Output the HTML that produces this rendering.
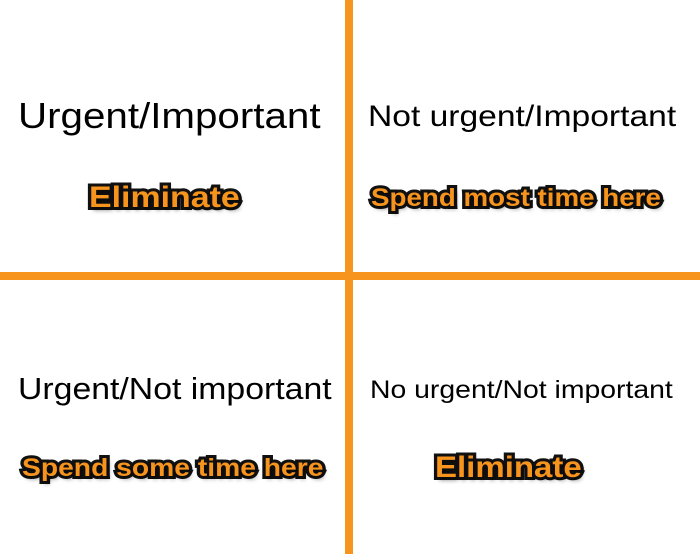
<!DOCTYPE html>
<html><head><style>
body{margin:0;width:700px;height:554px;background:#fff;position:relative;overflow:hidden;font-family:"Liberation Sans",sans-serif}
.v{position:absolute;left:345px;top:0;width:8px;height:554px;background:#f7941d}
.h{position:absolute;left:0;top:272px;width:700px;height:8px;background:#f7941d}
.t,.o{position:absolute;white-space:nowrap;transform-origin:0 0}
.t{color:#000}
.o{font-weight:bold;color:#f7941d;-webkit-text-stroke:6px #111;paint-order:stroke fill;text-shadow:2px 3px 4px rgba(0,0,0,.5)}
</style></head><body>
<div class="v"></div><div class="h"></div>
<div class="t" style="left:18px;top:95px;font-size:36px;transform:scaleX(1.12)">Urgent/Important</div>
<div class="t" style="left:368px;top:100px;font-size:30px;transform:scaleX(1.12)">Not urgent/Important</div>
<div class="t" style="left:18px;top:371px;font-size:31px;transform:scaleX(1.09)">Urgent/Not important</div>
<div class="t" style="left:370px;top:376px;font-size:25px;transform:scaleX(1.135)">No urgent/Not important</div>
<div class="o" style="left:89px;top:181px;font-size:30px;transform:scaleX(1.13)">Eliminate</div>
<div class="o" style="left:371px;top:184px;font-size:25px;transform:scaleX(1.11)">Spend most time here</div>
<div class="o" style="left:22px;top:454px;font-size:25px;transform:scaleX(1.13)">Spend some time here</div>
<div class="o" style="left:435px;top:451px;font-size:30px;transform:scaleX(1.1)">Eliminate</div>
</body></html>
